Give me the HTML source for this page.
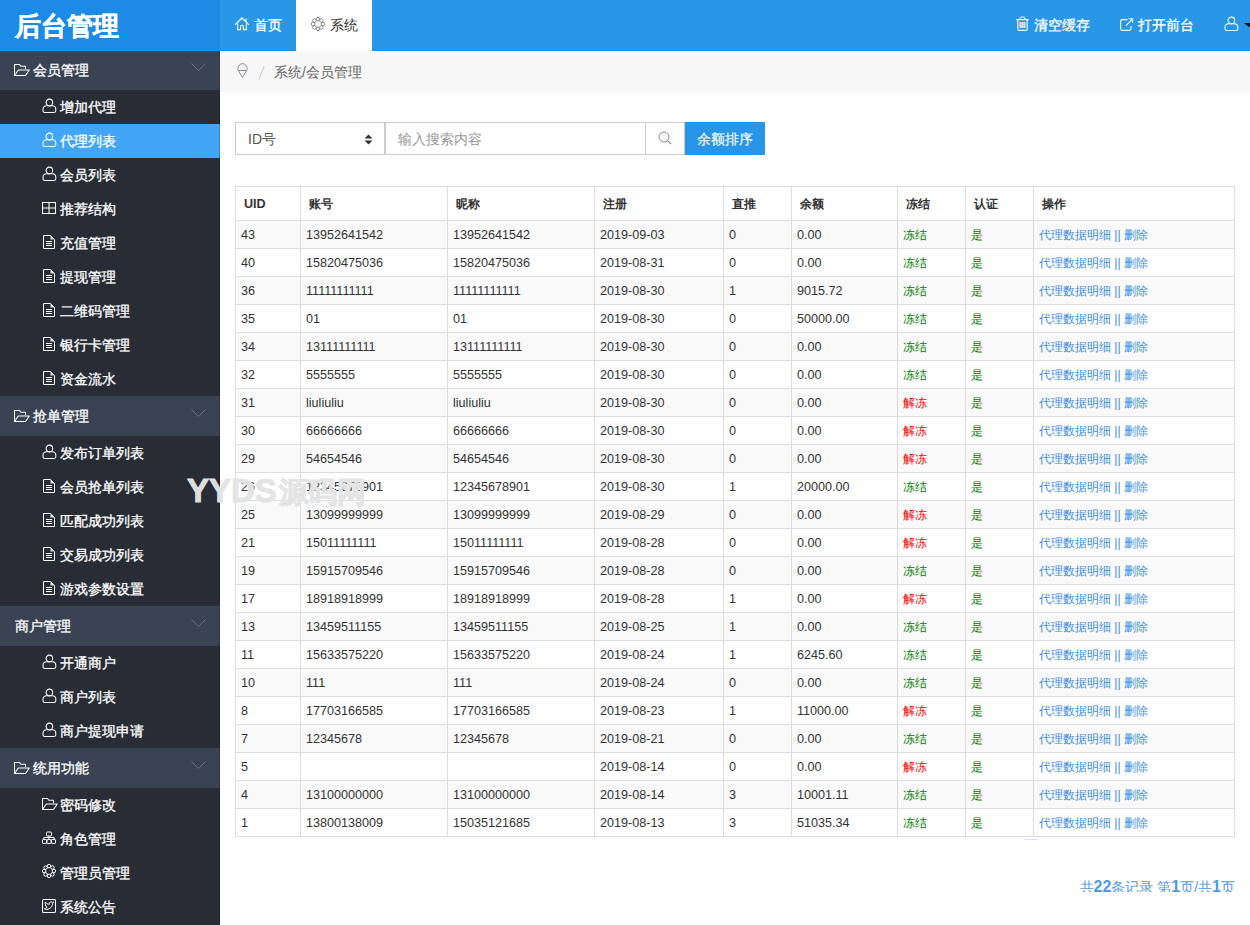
<!DOCTYPE html>
<html><head><meta charset="utf-8"><title>后台管理</title>
<style>
*{margin:0;padding:0;box-sizing:border-box}
html,body{width:1250px;height:925px;overflow:hidden;background:#fff}
body{font-family:"Liberation Sans",sans-serif;position:relative;color:#333}
.abs{position:absolute}
svg{display:block}
#hdr{position:absolute;left:0;top:0;width:1250px;height:51px;background:#2897e8;border-bottom:1px solid #1990e8}
#logo{-webkit-text-stroke:0.4px #fff;position:absolute;left:0;top:0;width:220px;height:51px;border-bottom:1px solid #1b9af0;background:#1b8be6;color:#fff;font-size:26px;font-weight:bold;line-height:52px;padding-left:15px;letter-spacing:0px}
.tab{-webkit-text-stroke:0.3px currentColor;position:absolute;top:0;height:50px;width:76px;font-size:14px;line-height:50px;color:#fff}
.tab .ic{position:absolute;top:17px}
.tab .tx{position:absolute;top:0}
#side{position:absolute;left:0;top:51px;width:220px;height:874px;background:#282d35}
.sg{-webkit-text-stroke:0.3px #fff;position:absolute;left:0;width:220px;height:40px;background:#394353;color:#fff;font-size:14px;line-height:40px}
.si{-webkit-text-stroke:0.3px #fff;position:absolute;left:0;width:220px;height:34px;color:#fff;font-size:14px;line-height:34px}
.si.sel{background:#42a5f5}
.sg .ic,.si .ic{position:absolute}
.sg .tx,.si .tx{position:absolute;top:0}
.chev{position:absolute;left:191px;top:13px;width:15px;height:8px}
#crumb{position:absolute;left:221px;top:52px;width:1029px;height:40px;background:#f7f7f7;font-size:14px;color:#666;line-height:40px}
.cell{position:absolute;font-size:12.6px;white-space:nowrap;line-height:30px}
.hl{position:absolute;background:#dddddd;height:1px}
.vl{position:absolute;background:#dddddd;width:1px}
.stripe{position:absolute;background:#f9f9f9}
.g{color:#008000}.r{color:#ff0000}.b{color:#3d8ee0}
</style></head><body>

<div id="hdr"></div>
<div id="logo">后台管理</div>
<div class="tab" style="left:220px"><span class="ic" style="left:14px;top:16px"><svg width="15" height="15" viewBox="0 0 15 15" ><path d="M1.2 8.6 L8 2 L14.8 8.6" fill="none" stroke="#fff" stroke-width="1.3" stroke-linejoin="round"/><path d="M12 2.4 V5.6" stroke="#fff" stroke-width="1.1"/><path d="M3.6 7.4 V13.6 H6.6 V10.6 C6.6 9.8 7.2 9.2 8 9.2 C8.8 9.2 9.4 9.8 9.4 10.6 V13.6 H12.4 V7.4" fill="none" stroke="#fff" stroke-width="1.1" stroke-linejoin="round"/></svg></span><span class="tx" style="left:34px">首页</span></div>
<div class="tab" style="left:296px;height:51px;background:#fff;color:#333;-webkit-text-stroke:0"><span class="ic" style="left:15px"><svg width="14" height="14" viewBox="0 0 14 14" ><circle cx="11.90" cy="7.00" r="1.75" fill="none" stroke="#8a8a8a" stroke-width="1"/><circle cx="10.46" cy="10.46" r="1.75" fill="none" stroke="#8a8a8a" stroke-width="1"/><circle cx="7.00" cy="11.90" r="1.75" fill="none" stroke="#8a8a8a" stroke-width="1"/><circle cx="3.54" cy="10.46" r="1.75" fill="none" stroke="#8a8a8a" stroke-width="1"/><circle cx="2.10" cy="7.00" r="1.75" fill="none" stroke="#8a8a8a" stroke-width="1"/><circle cx="3.54" cy="3.54" r="1.75" fill="none" stroke="#8a8a8a" stroke-width="1"/><circle cx="7.00" cy="2.10" r="1.75" fill="none" stroke="#8a8a8a" stroke-width="1"/><circle cx="10.46" cy="3.54" r="1.75" fill="none" stroke="#8a8a8a" stroke-width="1"/></svg></span><span class="tx" style="left:34px">系统</span></div>
<div class="abs" style="left:1016px;top:16px"><svg width="13" height="15" viewBox="0 0 13 15" ><path d="M4 3.2 V2.2 C4 1.5 4.5 1 5.2 1 H7.8 C8.5 1 9 1.5 9 2.2 V3.2" fill="none" stroke="#fff" stroke-width="1"/><path d="M0.3 3.6 H12.7" stroke="#fff" stroke-width="1.2"/><path d="M1.8 3.6 V13 C1.8 13.8 2.4 14.4 3.2 14.4 H9.8 C10.6 14.4 11.2 13.8 11.2 13 V3.6" fill="none" stroke="#fff" stroke-width="1.1"/><rect x="3.6" y="6" width="5.8" height="6" fill="#c8bff0"/><path d="M4.1 6 V12 M6.5 6 V12 M8.9 6 V12" stroke="#e8f4ff" stroke-width="1"/></svg></div><div class="abs" style="left:1034px;top:0;font-size:14px;line-height:50px;color:#fff;-webkit-text-stroke:0.3px #fff">清空缓存</div>
<div class="abs" style="left:1119px;top:17px"><svg width="15" height="15" viewBox="0 0 15 15" ><path d="M8.6 2.6 H3.4 C2.4 2.6 1.6 3.4 1.6 4.4 V11.6 C1.6 12.6 2.4 13.4 3.4 13.4 H10.2 C11.2 13.4 12 12.6 12 11.6 V9" fill="none" stroke="#fff" stroke-width="1.1"/><path d="M7 8.6 L13.4 2.2 M9.6 1.8 H13.6 V5.8" fill="none" stroke="#fff" stroke-width="1.1"/></svg></div><div class="abs" style="left:1138px;top:0;font-size:14px;line-height:50px;color:#fff;-webkit-text-stroke:0.3px #fff">打开前台</div>
<div class="abs" style="left:1224px;top:16px"><svg width="15" height="15" viewBox="0 0 15 15" ><ellipse cx="7.4" cy="4.5" rx="3.3" ry="3.4" fill="none" stroke="#fff" stroke-width="1.05"/><path d="M2.6 14.4 C1.6 14.4 1 13.7 1 12.8 V11.2 C1 9 2.6 7.8 4.6 7.8 H10.2 C12.2 7.8 13.8 9 13.8 11.2 V12.8 C13.8 13.7 13.2 14.4 12.2 14.4 Z" fill="none" stroke="#fff" stroke-width="1.05" stroke-linejoin="round"/></svg></div>
<div class="abs" style="left:1244px;top:23px;width:0;height:0;border-left:5px solid transparent;border-right:5px solid transparent;border-top:4px solid #111"></div>
<div id="side"></div>
<div class="sg" style="top:50px;clip-path:inset(1px 0 0 0);"><span class="ic" style="left:14px;top:12px"><svg width="16" height="15" viewBox="0 0 16 15" ><path d="M0.5 13.5 V2.5 H5.5 L6.8 4.2 H11.5 V7" fill="none" stroke="#fff" stroke-width="1.05" stroke-linejoin="round"/><path d="M0.5 13.5 L4.3 8 H15.3 L11.5 13.5 Z" fill="none" stroke="#fff" stroke-width="1.05" stroke-linejoin="round"/></svg></span><span class="tx" style="left:33px">会员管理</span><svg class="chev" viewBox="0 0 15 8"><path d="M0.5 0.5 L7.5 7.5 L14.5 0.5" fill="none" stroke="#6b7079" stroke-width="1"/></svg></div>
<div class="si" style="top:90px"><span class="ic" style="left:42px;top:8px"><svg width="15" height="15" viewBox="0 0 15 15" ><ellipse cx="7.4" cy="4.5" rx="3.3" ry="3.4" fill="none" stroke="#fff" stroke-width="1.05"/><path d="M2.6 14.4 C1.6 14.4 1 13.7 1 12.8 V11.2 C1 9 2.6 7.8 4.6 7.8 H10.2 C12.2 7.8 13.8 9 13.8 11.2 V12.8 C13.8 13.7 13.2 14.4 12.2 14.4 Z" fill="none" stroke="#fff" stroke-width="1.05" stroke-linejoin="round"/></svg></span><span class="tx" style="left:60px">增加代理</span></div>
<div class="si sel" style="top:124px"><span class="ic" style="left:42px;top:8px"><svg width="15" height="15" viewBox="0 0 15 15" ><ellipse cx="7.4" cy="4.5" rx="3.3" ry="3.4" fill="none" stroke="#fff" stroke-width="1.05"/><path d="M2.6 14.4 C1.6 14.4 1 13.7 1 12.8 V11.2 C1 9 2.6 7.8 4.6 7.8 H10.2 C12.2 7.8 13.8 9 13.8 11.2 V12.8 C13.8 13.7 13.2 14.4 12.2 14.4 Z" fill="none" stroke="#fff" stroke-width="1.05" stroke-linejoin="round"/></svg></span><span class="tx" style="left:60px">代理列表</span></div>
<div class="si" style="top:158px"><span class="ic" style="left:42px;top:8px"><svg width="15" height="15" viewBox="0 0 15 15" ><ellipse cx="7.4" cy="4.5" rx="3.3" ry="3.4" fill="none" stroke="#fff" stroke-width="1.05"/><path d="M2.6 14.4 C1.6 14.4 1 13.7 1 12.8 V11.2 C1 9 2.6 7.8 4.6 7.8 H10.2 C12.2 7.8 13.8 9 13.8 11.2 V12.8 C13.8 13.7 13.2 14.4 12.2 14.4 Z" fill="none" stroke="#fff" stroke-width="1.05" stroke-linejoin="round"/></svg></span><span class="tx" style="left:60px">会员列表</span></div>
<div class="si" style="top:192px"><span class="ic" style="left:42px;top:8px"><svg width="15" height="15" viewBox="0 0 15 15" ><path d="M0.5 2.5 H13.5 V13.5 H0.5 Z M7 2.5 V13.5 M0.5 8 H13.5" fill="none" stroke="#fff" stroke-width="1.05"/></svg></span><span class="tx" style="left:60px">推荐结构</span></div>
<div class="si" style="top:226px"><span class="ic" style="left:42px;top:8px"><svg width="15" height="15" viewBox="0 0 15 15" ><path d="M1.5 1.5 H8.5 L12.5 5.5 V14.5 H1.5 Z" fill="none" stroke="#fff" stroke-width="1" stroke-linejoin="round"/><path d="M8.5 1.5 L12.5 5.5 H8.5 Z" fill="#fff" opacity="0.85"/><path d="M4 7.5 H10 M4 9.5 H10 M4 11.5 H10" stroke="#fff" stroke-width="1"/></svg></span><span class="tx" style="left:60px">充值管理</span></div>
<div class="si" style="top:260px"><span class="ic" style="left:42px;top:8px"><svg width="15" height="15" viewBox="0 0 15 15" ><path d="M1.5 1.5 H8.5 L12.5 5.5 V14.5 H1.5 Z" fill="none" stroke="#fff" stroke-width="1" stroke-linejoin="round"/><path d="M8.5 1.5 L12.5 5.5 H8.5 Z" fill="#fff" opacity="0.85"/><path d="M4 7.5 H10 M4 9.5 H10 M4 11.5 H10" stroke="#fff" stroke-width="1"/></svg></span><span class="tx" style="left:60px">提现管理</span></div>
<div class="si" style="top:294px"><span class="ic" style="left:42px;top:8px"><svg width="15" height="15" viewBox="0 0 15 15" ><path d="M1.5 1.5 H8.5 L12.5 5.5 V14.5 H1.5 Z" fill="none" stroke="#fff" stroke-width="1" stroke-linejoin="round"/><path d="M8.5 1.5 L12.5 5.5 H8.5 Z" fill="#fff" opacity="0.85"/><path d="M4 7.5 H10 M4 9.5 H10 M4 11.5 H10" stroke="#fff" stroke-width="1"/></svg></span><span class="tx" style="left:60px">二维码管理</span></div>
<div class="si" style="top:328px"><span class="ic" style="left:42px;top:8px"><svg width="15" height="15" viewBox="0 0 15 15" ><path d="M1.5 1.5 H8.5 L12.5 5.5 V14.5 H1.5 Z" fill="none" stroke="#fff" stroke-width="1" stroke-linejoin="round"/><path d="M8.5 1.5 L12.5 5.5 H8.5 Z" fill="#fff" opacity="0.85"/><path d="M4 7.5 H10 M4 9.5 H10 M4 11.5 H10" stroke="#fff" stroke-width="1"/></svg></span><span class="tx" style="left:60px">银行卡管理</span></div>
<div class="si" style="top:362px"><span class="ic" style="left:42px;top:8px"><svg width="15" height="15" viewBox="0 0 15 15" ><path d="M1.5 1.5 H8.5 L12.5 5.5 V14.5 H1.5 Z" fill="none" stroke="#fff" stroke-width="1" stroke-linejoin="round"/><path d="M8.5 1.5 L12.5 5.5 H8.5 Z" fill="#fff" opacity="0.85"/><path d="M4 7.5 H10 M4 9.5 H10 M4 11.5 H10" stroke="#fff" stroke-width="1"/></svg></span><span class="tx" style="left:60px">资金流水</span></div>
<div class="sg" style="top:396px;"><span class="ic" style="left:14px;top:12px"><svg width="16" height="15" viewBox="0 0 16 15" ><path d="M0.5 13.5 V2.5 H5.5 L6.8 4.2 H11.5 V7" fill="none" stroke="#fff" stroke-width="1.05" stroke-linejoin="round"/><path d="M0.5 13.5 L4.3 8 H15.3 L11.5 13.5 Z" fill="none" stroke="#fff" stroke-width="1.05" stroke-linejoin="round"/></svg></span><span class="tx" style="left:33px">抢单管理</span><svg class="chev" viewBox="0 0 15 8"><path d="M0.5 0.5 L7.5 7.5 L14.5 0.5" fill="none" stroke="#6b7079" stroke-width="1"/></svg></div>
<div class="si" style="top:436px"><span class="ic" style="left:42px;top:8px"><svg width="15" height="15" viewBox="0 0 15 15" ><ellipse cx="7.4" cy="4.5" rx="3.3" ry="3.4" fill="none" stroke="#fff" stroke-width="1.05"/><path d="M2.6 14.4 C1.6 14.4 1 13.7 1 12.8 V11.2 C1 9 2.6 7.8 4.6 7.8 H10.2 C12.2 7.8 13.8 9 13.8 11.2 V12.8 C13.8 13.7 13.2 14.4 12.2 14.4 Z" fill="none" stroke="#fff" stroke-width="1.05" stroke-linejoin="round"/></svg></span><span class="tx" style="left:60px">发布订单列表</span></div>
<div class="si" style="top:470px"><span class="ic" style="left:42px;top:8px"><svg width="15" height="15" viewBox="0 0 15 15" ><path d="M1.5 1.5 H8.5 L12.5 5.5 V14.5 H1.5 Z" fill="none" stroke="#fff" stroke-width="1" stroke-linejoin="round"/><path d="M8.5 1.5 L12.5 5.5 H8.5 Z" fill="#fff" opacity="0.85"/><path d="M4 7.5 H10 M4 9.5 H10 M4 11.5 H10" stroke="#fff" stroke-width="1"/></svg></span><span class="tx" style="left:60px">会员抢单列表</span></div>
<div class="si" style="top:504px"><span class="ic" style="left:42px;top:8px"><svg width="15" height="15" viewBox="0 0 15 15" ><path d="M1.5 1.5 H8.5 L12.5 5.5 V14.5 H1.5 Z" fill="none" stroke="#fff" stroke-width="1" stroke-linejoin="round"/><path d="M8.5 1.5 L12.5 5.5 H8.5 Z" fill="#fff" opacity="0.85"/><path d="M4 7.5 H10 M4 9.5 H10 M4 11.5 H10" stroke="#fff" stroke-width="1"/></svg></span><span class="tx" style="left:60px">匹配成功列表</span></div>
<div class="si" style="top:538px"><span class="ic" style="left:42px;top:8px"><svg width="15" height="15" viewBox="0 0 15 15" ><path d="M1.5 1.5 H8.5 L12.5 5.5 V14.5 H1.5 Z" fill="none" stroke="#fff" stroke-width="1" stroke-linejoin="round"/><path d="M8.5 1.5 L12.5 5.5 H8.5 Z" fill="#fff" opacity="0.85"/><path d="M4 7.5 H10 M4 9.5 H10 M4 11.5 H10" stroke="#fff" stroke-width="1"/></svg></span><span class="tx" style="left:60px">交易成功列表</span></div>
<div class="si" style="top:572px"><span class="ic" style="left:42px;top:8px"><svg width="15" height="15" viewBox="0 0 15 15" ><path d="M1.5 1.5 H8.5 L12.5 5.5 V14.5 H1.5 Z" fill="none" stroke="#fff" stroke-width="1" stroke-linejoin="round"/><path d="M8.5 1.5 L12.5 5.5 H8.5 Z" fill="#fff" opacity="0.85"/><path d="M4 7.5 H10 M4 9.5 H10 M4 11.5 H10" stroke="#fff" stroke-width="1"/></svg></span><span class="tx" style="left:60px">游戏参数设置</span></div>
<div class="sg" style="top:606px;"><span class="tx" style="left:15px">商户管理</span><svg class="chev" viewBox="0 0 15 8"><path d="M0.5 0.5 L7.5 7.5 L14.5 0.5" fill="none" stroke="#6b7079" stroke-width="1"/></svg></div>
<div class="si" style="top:646px"><span class="ic" style="left:42px;top:8px"><svg width="15" height="15" viewBox="0 0 15 15" ><ellipse cx="7.4" cy="4.5" rx="3.3" ry="3.4" fill="none" stroke="#fff" stroke-width="1.05"/><path d="M2.6 14.4 C1.6 14.4 1 13.7 1 12.8 V11.2 C1 9 2.6 7.8 4.6 7.8 H10.2 C12.2 7.8 13.8 9 13.8 11.2 V12.8 C13.8 13.7 13.2 14.4 12.2 14.4 Z" fill="none" stroke="#fff" stroke-width="1.05" stroke-linejoin="round"/></svg></span><span class="tx" style="left:60px">开通商户</span></div>
<div class="si" style="top:680px"><span class="ic" style="left:42px;top:8px"><svg width="15" height="15" viewBox="0 0 15 15" ><ellipse cx="7.4" cy="4.5" rx="3.3" ry="3.4" fill="none" stroke="#fff" stroke-width="1.05"/><path d="M2.6 14.4 C1.6 14.4 1 13.7 1 12.8 V11.2 C1 9 2.6 7.8 4.6 7.8 H10.2 C12.2 7.8 13.8 9 13.8 11.2 V12.8 C13.8 13.7 13.2 14.4 12.2 14.4 Z" fill="none" stroke="#fff" stroke-width="1.05" stroke-linejoin="round"/></svg></span><span class="tx" style="left:60px">商户列表</span></div>
<div class="si" style="top:714px"><span class="ic" style="left:42px;top:8px"><svg width="15" height="15" viewBox="0 0 15 15" ><ellipse cx="7.4" cy="4.5" rx="3.3" ry="3.4" fill="none" stroke="#fff" stroke-width="1.05"/><path d="M2.6 14.4 C1.6 14.4 1 13.7 1 12.8 V11.2 C1 9 2.6 7.8 4.6 7.8 H10.2 C12.2 7.8 13.8 9 13.8 11.2 V12.8 C13.8 13.7 13.2 14.4 12.2 14.4 Z" fill="none" stroke="#fff" stroke-width="1.05" stroke-linejoin="round"/></svg></span><span class="tx" style="left:60px">商户提现申请</span></div>
<div class="sg" style="top:748px;"><span class="ic" style="left:14px;top:12px"><svg width="16" height="15" viewBox="0 0 16 15" ><path d="M0.5 13.5 V2.5 H5.5 L6.8 4.2 H11.5 V7" fill="none" stroke="#fff" stroke-width="1.05" stroke-linejoin="round"/><path d="M0.5 13.5 L4.3 8 H15.3 L11.5 13.5 Z" fill="none" stroke="#fff" stroke-width="1.05" stroke-linejoin="round"/></svg></span><span class="tx" style="left:33px">统用功能</span><svg class="chev" viewBox="0 0 15 8"><path d="M0.5 0.5 L7.5 7.5 L14.5 0.5" fill="none" stroke="#6b7079" stroke-width="1"/></svg></div>
<div class="si" style="top:788px"><span class="ic" style="left:42px;top:8px"><svg width="16" height="15" viewBox="0 0 16 15" ><path d="M0.5 13.5 V2.5 H5.5 L6.8 4.2 H11.5 V7" fill="none" stroke="#fff" stroke-width="1.05" stroke-linejoin="round"/><path d="M0.5 13.5 L4.3 8 H15.3 L11.5 13.5 Z" fill="none" stroke="#fff" stroke-width="1.05" stroke-linejoin="round"/></svg></span><span class="tx" style="left:60px">密码修改</span></div>
<div class="si" style="top:822px"><span class="ic" style="left:42px;top:8px"><svg width="15" height="15" viewBox="0 0 15 15" ><rect x="4.5" y="2" width="5" height="4" rx="0.8" fill="none" stroke="#fff" stroke-width="1"/><path d="M1.8 9 V7.5 H12.2 V9 M7 6 V9" fill="none" stroke="#fff" stroke-width="1"/><rect x="0.5" y="9.5" width="4" height="4" rx="0.6" fill="none" stroke="#fff" stroke-width="1"/><rect x="5" y="9.5" width="4" height="4" rx="0.6" fill="none" stroke="#fff" stroke-width="1"/><rect x="9.5" y="9.5" width="4" height="4" rx="0.6" fill="none" stroke="#fff" stroke-width="1"/></svg></span><span class="tx" style="left:60px">角色管理</span></div>
<div class="si" style="top:856px"><span class="ic" style="left:42px;top:8px"><svg width="14" height="14" viewBox="0 0 14 14" ><circle cx="11.90" cy="7.00" r="1.75" fill="none" stroke="#fff" stroke-width="1"/><circle cx="10.46" cy="10.46" r="1.75" fill="none" stroke="#fff" stroke-width="1"/><circle cx="7.00" cy="11.90" r="1.75" fill="none" stroke="#fff" stroke-width="1"/><circle cx="3.54" cy="10.46" r="1.75" fill="none" stroke="#fff" stroke-width="1"/><circle cx="2.10" cy="7.00" r="1.75" fill="none" stroke="#fff" stroke-width="1"/><circle cx="3.54" cy="3.54" r="1.75" fill="none" stroke="#fff" stroke-width="1"/><circle cx="7.00" cy="2.10" r="1.75" fill="none" stroke="#fff" stroke-width="1"/><circle cx="10.46" cy="3.54" r="1.75" fill="none" stroke="#fff" stroke-width="1"/></svg></span><span class="tx" style="left:60px">管理员管理</span></div>
<div class="si" style="top:890px"><span class="ic" style="left:42px;top:8px"><svg width="15" height="15" viewBox="0 0 15 15" ><rect x="0.5" y="1.5" width="13" height="13" rx="1" fill="none" stroke="#fff" stroke-width="1.05"/><path d="M2.4 10.8 C4.4 11.8 7.6 11.6 9.6 8.6 C10.4 7.2 10.8 6 10.6 5 L11.6 4 L10.2 4.3 C9.4 3.5 7.8 3.7 7.4 5.1 C7.2 5.7 7.4 6.3 7.4 6.3 C5.8 6.3 4.4 5.5 3.2 4.2 C2.8 5.4 3.2 6.8 4.2 7.4 L3.4 7.4 C3.6 8.4 4.4 9 5.2 9.2 C4.4 9.9 3.4 10.4 2.4 10.8 Z" fill="none" stroke="#fff" stroke-width="1" stroke-linejoin="round"/></svg></span><span class="tx" style="left:60px">系统公告</span></div>
<div class="abs" style="left:219px;top:51px;width:1px;height:874px;background:rgba(0,0,0,0.18)"></div>
<div id="crumb"><span class="abs" style="left:16px;top:11px"><svg width="11" height="15" viewBox="0 0 11 15" ><path d="M1.3 7.6 C0.8 6.6 0.9 5.8 1 5.2 A4.5 4.5 0 0 1 10 5.2 C10.1 5.8 10.2 6.6 9.7 7.6 L5.5 14.4 Z" fill="none" stroke="#8a8a98" stroke-width="1" stroke-linejoin="round"/><path d="M1.2 7.5 H9.8" stroke="#8a8a98" stroke-width="1"/></svg></span><span class="abs" style="left:37px;top:14px"><svg width="7" height="14" viewBox="0 0 7 14" ><path d="M6.2 0.5 L0.8 13.5" stroke="#ccc" stroke-width="1.1"/></svg></span><span class="abs" style="left:53px">系统/会员管理</span></div>
<div class="abs" style="left:235px;top:122px;width:150px;height:33px;border:1px solid #ccc;background:#fff"></div>
<div class="abs" style="left:248px;top:122px;line-height:35px;font-size:14px;color:#555">ID号</div>
<div class="abs" style="left:364px;top:134px"><svg width="9" height="11" viewBox="0 0 9 11" ><path d="M0.5 4.6 L4.5 0.6 L8.5 4.6 Z M0.5 6.4 L4.5 10.4 L8.5 6.4 Z" fill="#333"/></svg></div>
<div class="abs" style="left:385px;top:122px;width:261px;height:33px;border:1px solid #ccc;background:#fff"></div>
<div class="abs" style="left:398px;top:122px;line-height:35px;font-size:14px;color:#999">输入搜索内容</div>
<div class="abs" style="left:645px;top:122px;width:40px;height:33px;border:1px solid #ccc;border-left:1px solid #ccc;background:#fff"></div>
<div class="abs" style="left:658px;top:131px"><svg width="14" height="14" viewBox="0 0 14 14" ><circle cx="6" cy="6" r="5" fill="none" stroke="#888" stroke-width="1"/><path d="M9.6 9.6 L13 13" stroke="#888" stroke-width="1.1"/></svg></div>
<div class="abs" style="left:685px;top:122px;width:80px;height:33px;background:#2896e8;color:#fff;font-size:14px;line-height:35px;text-align:center;-webkit-text-stroke:0.15px #fff">余额排序</div>
<div class="stripe" style="left:235px;top:220px;width:999px;height:28px"></div>
<div class="stripe" style="left:235px;top:276px;width:999px;height:28px"></div>
<div class="stripe" style="left:235px;top:332px;width:999px;height:28px"></div>
<div class="stripe" style="left:235px;top:388px;width:999px;height:28px"></div>
<div class="stripe" style="left:235px;top:444px;width:999px;height:28px"></div>
<div class="stripe" style="left:235px;top:500px;width:999px;height:28px"></div>
<div class="stripe" style="left:235px;top:556px;width:999px;height:28px"></div>
<div class="stripe" style="left:235px;top:612px;width:999px;height:28px"></div>
<div class="stripe" style="left:235px;top:668px;width:999px;height:28px"></div>
<div class="stripe" style="left:235px;top:724px;width:999px;height:28px"></div>
<div class="stripe" style="left:235px;top:780px;width:999px;height:28px"></div>
<div class="hl" style="left:235px;top:186px;width:1000px"></div>
<div class="hl" style="left:235px;top:220px;width:1000px"></div>
<div class="hl" style="left:235px;top:248px;width:1000px"></div>
<div class="hl" style="left:235px;top:276px;width:1000px"></div>
<div class="hl" style="left:235px;top:304px;width:1000px"></div>
<div class="hl" style="left:235px;top:332px;width:1000px"></div>
<div class="hl" style="left:235px;top:360px;width:1000px"></div>
<div class="hl" style="left:235px;top:388px;width:1000px"></div>
<div class="hl" style="left:235px;top:416px;width:1000px"></div>
<div class="hl" style="left:235px;top:444px;width:1000px"></div>
<div class="hl" style="left:235px;top:472px;width:1000px"></div>
<div class="hl" style="left:235px;top:500px;width:1000px"></div>
<div class="hl" style="left:235px;top:528px;width:1000px"></div>
<div class="hl" style="left:235px;top:556px;width:1000px"></div>
<div class="hl" style="left:235px;top:584px;width:1000px"></div>
<div class="hl" style="left:235px;top:612px;width:1000px"></div>
<div class="hl" style="left:235px;top:640px;width:1000px"></div>
<div class="hl" style="left:235px;top:668px;width:1000px"></div>
<div class="hl" style="left:235px;top:696px;width:1000px"></div>
<div class="hl" style="left:235px;top:724px;width:1000px"></div>
<div class="hl" style="left:235px;top:752px;width:1000px"></div>
<div class="hl" style="left:235px;top:780px;width:1000px"></div>
<div class="hl" style="left:235px;top:808px;width:1000px"></div>
<div class="hl" style="left:235px;top:836px;width:1000px"></div>
<div class="vl" style="left:235px;top:186px;height:651px"></div>
<div class="vl" style="left:300px;top:186px;height:651px"></div>
<div class="vl" style="left:447px;top:186px;height:651px"></div>
<div class="vl" style="left:594px;top:186px;height:651px"></div>
<div class="vl" style="left:723px;top:186px;height:651px"></div>
<div class="vl" style="left:791px;top:186px;height:651px"></div>
<div class="vl" style="left:897px;top:186px;height:651px"></div>
<div class="vl" style="left:965px;top:186px;height:651px"></div>
<div class="vl" style="left:1033px;top:186px;height:651px"></div>
<div class="vl" style="left:1234px;top:186px;height:651px"></div>
<div class="cell" style="left:244px;top:186px;line-height:36px;font-weight:bold;font-size:12.6px">UID</div>
<div class="cell" style="left:309px;top:186px;line-height:36px;font-weight:bold;font-size:12px">账号</div>
<div class="cell" style="left:456px;top:186px;line-height:36px;font-weight:bold;font-size:12px">昵称</div>
<div class="cell" style="left:603px;top:186px;line-height:36px;font-weight:bold;font-size:12px">注册</div>
<div class="cell" style="left:732px;top:186px;line-height:36px;font-weight:bold;font-size:12px">直推</div>
<div class="cell" style="left:800px;top:186px;line-height:36px;font-weight:bold;font-size:12px">余额</div>
<div class="cell" style="left:906px;top:186px;line-height:36px;font-weight:bold;font-size:12px">冻结</div>
<div class="cell" style="left:974px;top:186px;line-height:36px;font-weight:bold;font-size:12px">认证</div>
<div class="cell" style="left:1042px;top:186px;line-height:36px;font-weight:bold;font-size:12px">操作</div>
<div class="cell" style="left:241px;top:220px">43</div>
<div class="cell" style="left:306px;top:220px">13952641542</div>
<div class="cell" style="left:453px;top:220px">13952641542</div>
<div class="cell" style="left:600px;top:220px">2019-09-03</div>
<div class="cell" style="left:729px;top:220px">0</div>
<div class="cell" style="left:797px;top:220px">0.00</div>
<div class="cell" style="left:903px;top:220px;font-size:12px"><span class="g">冻结</span></div>
<div class="cell g" style="left:971px;top:220px;font-size:12px">是</div>
<div class="cell b" style="left:1039px;top:220px;font-size:12px">代理数据明细 || 删除</div>
<div class="cell" style="left:241px;top:248px">40</div>
<div class="cell" style="left:306px;top:248px">15820475036</div>
<div class="cell" style="left:453px;top:248px">15820475036</div>
<div class="cell" style="left:600px;top:248px">2019-08-31</div>
<div class="cell" style="left:729px;top:248px">0</div>
<div class="cell" style="left:797px;top:248px">0.00</div>
<div class="cell" style="left:903px;top:248px;font-size:12px"><span class="g">冻结</span></div>
<div class="cell g" style="left:971px;top:248px;font-size:12px">是</div>
<div class="cell b" style="left:1039px;top:248px;font-size:12px">代理数据明细 || 删除</div>
<div class="cell" style="left:241px;top:276px">36</div>
<div class="cell" style="left:306px;top:276px">11111111111</div>
<div class="cell" style="left:453px;top:276px">11111111111</div>
<div class="cell" style="left:600px;top:276px">2019-08-30</div>
<div class="cell" style="left:729px;top:276px">1</div>
<div class="cell" style="left:797px;top:276px">9015.72</div>
<div class="cell" style="left:903px;top:276px;font-size:12px"><span class="g">冻结</span></div>
<div class="cell g" style="left:971px;top:276px;font-size:12px">是</div>
<div class="cell b" style="left:1039px;top:276px;font-size:12px">代理数据明细 || 删除</div>
<div class="cell" style="left:241px;top:304px">35</div>
<div class="cell" style="left:306px;top:304px">01</div>
<div class="cell" style="left:453px;top:304px">01</div>
<div class="cell" style="left:600px;top:304px">2019-08-30</div>
<div class="cell" style="left:729px;top:304px">0</div>
<div class="cell" style="left:797px;top:304px">50000.00</div>
<div class="cell" style="left:903px;top:304px;font-size:12px"><span class="g">冻结</span></div>
<div class="cell g" style="left:971px;top:304px;font-size:12px">是</div>
<div class="cell b" style="left:1039px;top:304px;font-size:12px">代理数据明细 || 删除</div>
<div class="cell" style="left:241px;top:332px">34</div>
<div class="cell" style="left:306px;top:332px">13111111111</div>
<div class="cell" style="left:453px;top:332px">13111111111</div>
<div class="cell" style="left:600px;top:332px">2019-08-30</div>
<div class="cell" style="left:729px;top:332px">0</div>
<div class="cell" style="left:797px;top:332px">0.00</div>
<div class="cell" style="left:903px;top:332px;font-size:12px"><span class="g">冻结</span></div>
<div class="cell g" style="left:971px;top:332px;font-size:12px">是</div>
<div class="cell b" style="left:1039px;top:332px;font-size:12px">代理数据明细 || 删除</div>
<div class="cell" style="left:241px;top:360px">32</div>
<div class="cell" style="left:306px;top:360px">5555555</div>
<div class="cell" style="left:453px;top:360px">5555555</div>
<div class="cell" style="left:600px;top:360px">2019-08-30</div>
<div class="cell" style="left:729px;top:360px">0</div>
<div class="cell" style="left:797px;top:360px">0.00</div>
<div class="cell" style="left:903px;top:360px;font-size:12px"><span class="g">冻结</span></div>
<div class="cell g" style="left:971px;top:360px;font-size:12px">是</div>
<div class="cell b" style="left:1039px;top:360px;font-size:12px">代理数据明细 || 删除</div>
<div class="cell" style="left:241px;top:388px">31</div>
<div class="cell" style="left:306px;top:388px">liuliuliu</div>
<div class="cell" style="left:453px;top:388px">liuliuliu</div>
<div class="cell" style="left:600px;top:388px">2019-08-30</div>
<div class="cell" style="left:729px;top:388px">0</div>
<div class="cell" style="left:797px;top:388px">0.00</div>
<div class="cell" style="left:903px;top:388px;font-size:12px"><span class="r">解冻</span></div>
<div class="cell g" style="left:971px;top:388px;font-size:12px">是</div>
<div class="cell b" style="left:1039px;top:388px;font-size:12px">代理数据明细 || 删除</div>
<div class="cell" style="left:241px;top:416px">30</div>
<div class="cell" style="left:306px;top:416px">66666666</div>
<div class="cell" style="left:453px;top:416px">66666666</div>
<div class="cell" style="left:600px;top:416px">2019-08-30</div>
<div class="cell" style="left:729px;top:416px">0</div>
<div class="cell" style="left:797px;top:416px">0.00</div>
<div class="cell" style="left:903px;top:416px;font-size:12px"><span class="r">解冻</span></div>
<div class="cell g" style="left:971px;top:416px;font-size:12px">是</div>
<div class="cell b" style="left:1039px;top:416px;font-size:12px">代理数据明细 || 删除</div>
<div class="cell" style="left:241px;top:444px">29</div>
<div class="cell" style="left:306px;top:444px">54654546</div>
<div class="cell" style="left:453px;top:444px">54654546</div>
<div class="cell" style="left:600px;top:444px">2019-08-30</div>
<div class="cell" style="left:729px;top:444px">0</div>
<div class="cell" style="left:797px;top:444px">0.00</div>
<div class="cell" style="left:903px;top:444px;font-size:12px"><span class="r">解冻</span></div>
<div class="cell g" style="left:971px;top:444px;font-size:12px">是</div>
<div class="cell b" style="left:1039px;top:444px;font-size:12px">代理数据明细 || 删除</div>
<div class="cell" style="left:241px;top:472px">26</div>
<div class="cell" style="left:306px;top:472px">12345678901</div>
<div class="cell" style="left:453px;top:472px">12345678901</div>
<div class="cell" style="left:600px;top:472px">2019-08-30</div>
<div class="cell" style="left:729px;top:472px">1</div>
<div class="cell" style="left:797px;top:472px">20000.00</div>
<div class="cell" style="left:903px;top:472px;font-size:12px"><span class="g">冻结</span></div>
<div class="cell g" style="left:971px;top:472px;font-size:12px">是</div>
<div class="cell b" style="left:1039px;top:472px;font-size:12px">代理数据明细 || 删除</div>
<div class="cell" style="left:241px;top:500px">25</div>
<div class="cell" style="left:306px;top:500px">13099999999</div>
<div class="cell" style="left:453px;top:500px">13099999999</div>
<div class="cell" style="left:600px;top:500px">2019-08-29</div>
<div class="cell" style="left:729px;top:500px">0</div>
<div class="cell" style="left:797px;top:500px">0.00</div>
<div class="cell" style="left:903px;top:500px;font-size:12px"><span class="r">解冻</span></div>
<div class="cell g" style="left:971px;top:500px;font-size:12px">是</div>
<div class="cell b" style="left:1039px;top:500px;font-size:12px">代理数据明细 || 删除</div>
<div class="cell" style="left:241px;top:528px">21</div>
<div class="cell" style="left:306px;top:528px">15011111111</div>
<div class="cell" style="left:453px;top:528px">15011111111</div>
<div class="cell" style="left:600px;top:528px">2019-08-28</div>
<div class="cell" style="left:729px;top:528px">0</div>
<div class="cell" style="left:797px;top:528px">0.00</div>
<div class="cell" style="left:903px;top:528px;font-size:12px"><span class="r">解冻</span></div>
<div class="cell g" style="left:971px;top:528px;font-size:12px">是</div>
<div class="cell b" style="left:1039px;top:528px;font-size:12px">代理数据明细 || 删除</div>
<div class="cell" style="left:241px;top:556px">19</div>
<div class="cell" style="left:306px;top:556px">15915709546</div>
<div class="cell" style="left:453px;top:556px">15915709546</div>
<div class="cell" style="left:600px;top:556px">2019-08-28</div>
<div class="cell" style="left:729px;top:556px">0</div>
<div class="cell" style="left:797px;top:556px">0.00</div>
<div class="cell" style="left:903px;top:556px;font-size:12px"><span class="g">冻结</span></div>
<div class="cell g" style="left:971px;top:556px;font-size:12px">是</div>
<div class="cell b" style="left:1039px;top:556px;font-size:12px">代理数据明细 || 删除</div>
<div class="cell" style="left:241px;top:584px">17</div>
<div class="cell" style="left:306px;top:584px">18918918999</div>
<div class="cell" style="left:453px;top:584px">18918918999</div>
<div class="cell" style="left:600px;top:584px">2019-08-28</div>
<div class="cell" style="left:729px;top:584px">1</div>
<div class="cell" style="left:797px;top:584px">0.00</div>
<div class="cell" style="left:903px;top:584px;font-size:12px"><span class="r">解冻</span></div>
<div class="cell g" style="left:971px;top:584px;font-size:12px">是</div>
<div class="cell b" style="left:1039px;top:584px;font-size:12px">代理数据明细 || 删除</div>
<div class="cell" style="left:241px;top:612px">13</div>
<div class="cell" style="left:306px;top:612px">13459511155</div>
<div class="cell" style="left:453px;top:612px">13459511155</div>
<div class="cell" style="left:600px;top:612px">2019-08-25</div>
<div class="cell" style="left:729px;top:612px">1</div>
<div class="cell" style="left:797px;top:612px">0.00</div>
<div class="cell" style="left:903px;top:612px;font-size:12px"><span class="g">冻结</span></div>
<div class="cell g" style="left:971px;top:612px;font-size:12px">是</div>
<div class="cell b" style="left:1039px;top:612px;font-size:12px">代理数据明细 || 删除</div>
<div class="cell" style="left:241px;top:640px">11</div>
<div class="cell" style="left:306px;top:640px">15633575220</div>
<div class="cell" style="left:453px;top:640px">15633575220</div>
<div class="cell" style="left:600px;top:640px">2019-08-24</div>
<div class="cell" style="left:729px;top:640px">1</div>
<div class="cell" style="left:797px;top:640px">6245.60</div>
<div class="cell" style="left:903px;top:640px;font-size:12px"><span class="g">冻结</span></div>
<div class="cell g" style="left:971px;top:640px;font-size:12px">是</div>
<div class="cell b" style="left:1039px;top:640px;font-size:12px">代理数据明细 || 删除</div>
<div class="cell" style="left:241px;top:668px">10</div>
<div class="cell" style="left:306px;top:668px">111</div>
<div class="cell" style="left:453px;top:668px">111</div>
<div class="cell" style="left:600px;top:668px">2019-08-24</div>
<div class="cell" style="left:729px;top:668px">0</div>
<div class="cell" style="left:797px;top:668px">0.00</div>
<div class="cell" style="left:903px;top:668px;font-size:12px"><span class="g">冻结</span></div>
<div class="cell g" style="left:971px;top:668px;font-size:12px">是</div>
<div class="cell b" style="left:1039px;top:668px;font-size:12px">代理数据明细 || 删除</div>
<div class="cell" style="left:241px;top:696px">8</div>
<div class="cell" style="left:306px;top:696px">17703166585</div>
<div class="cell" style="left:453px;top:696px">17703166585</div>
<div class="cell" style="left:600px;top:696px">2019-08-23</div>
<div class="cell" style="left:729px;top:696px">1</div>
<div class="cell" style="left:797px;top:696px">11000.00</div>
<div class="cell" style="left:903px;top:696px;font-size:12px"><span class="r">解冻</span></div>
<div class="cell g" style="left:971px;top:696px;font-size:12px">是</div>
<div class="cell b" style="left:1039px;top:696px;font-size:12px">代理数据明细 || 删除</div>
<div class="cell" style="left:241px;top:724px">7</div>
<div class="cell" style="left:306px;top:724px">12345678</div>
<div class="cell" style="left:453px;top:724px">12345678</div>
<div class="cell" style="left:600px;top:724px">2019-08-21</div>
<div class="cell" style="left:729px;top:724px">0</div>
<div class="cell" style="left:797px;top:724px">0.00</div>
<div class="cell" style="left:903px;top:724px;font-size:12px"><span class="g">冻结</span></div>
<div class="cell g" style="left:971px;top:724px;font-size:12px">是</div>
<div class="cell b" style="left:1039px;top:724px;font-size:12px">代理数据明细 || 删除</div>
<div class="cell" style="left:241px;top:752px">5</div>
<div class="cell" style="left:600px;top:752px">2019-08-14</div>
<div class="cell" style="left:729px;top:752px">0</div>
<div class="cell" style="left:797px;top:752px">0.00</div>
<div class="cell" style="left:903px;top:752px;font-size:12px"><span class="r">解冻</span></div>
<div class="cell g" style="left:971px;top:752px;font-size:12px">是</div>
<div class="cell b" style="left:1039px;top:752px;font-size:12px">代理数据明细 || 删除</div>
<div class="cell" style="left:241px;top:780px">4</div>
<div class="cell" style="left:306px;top:780px">13100000000</div>
<div class="cell" style="left:453px;top:780px">13100000000</div>
<div class="cell" style="left:600px;top:780px">2019-08-14</div>
<div class="cell" style="left:729px;top:780px">3</div>
<div class="cell" style="left:797px;top:780px">10001.11</div>
<div class="cell" style="left:903px;top:780px;font-size:12px"><span class="g">冻结</span></div>
<div class="cell g" style="left:971px;top:780px;font-size:12px">是</div>
<div class="cell b" style="left:1039px;top:780px;font-size:12px">代理数据明细 || 删除</div>
<div class="cell" style="left:241px;top:808px">1</div>
<div class="cell" style="left:306px;top:808px">13800138009</div>
<div class="cell" style="left:453px;top:808px">15035121685</div>
<div class="cell" style="left:600px;top:808px">2019-08-13</div>
<div class="cell" style="left:729px;top:808px">3</div>
<div class="cell" style="left:797px;top:808px">51035.34</div>
<div class="cell" style="left:903px;top:808px;font-size:12px"><span class="g">冻结</span></div>
<div class="cell g" style="left:971px;top:808px;font-size:12px">是</div>
<div class="cell b" style="left:1039px;top:808px;font-size:12px">代理数据明细 || 删除</div>
<div class="abs" style="left:1025px;top:839px;width:13px;height:1px;background:rgba(120,170,230,0.35)"></div>
<div class="abs" style="left:1000px;top:870px;width:235px;height:22px;overflow:hidden;text-align:right;font-size:14px;line-height:33px;color:#4f9ae0;white-space:nowrap">共<b style="font-size:16px">22</b>条记录 第<b style="font-size:16px">1</b>页/共<b style="font-size:16px">1</b>页</div>
<div class="abs" style="left:187px;top:471px;white-space:nowrap;color:rgba(228,228,228,0.97);-webkit-text-stroke:1px rgba(228,228,228,0.97);font-weight:bold;line-height:40px"><span style="font-size:33px">YYDS</span><span style="font-size:28.5px;margin-left:2px">源码网</span></div>
</body></html>
